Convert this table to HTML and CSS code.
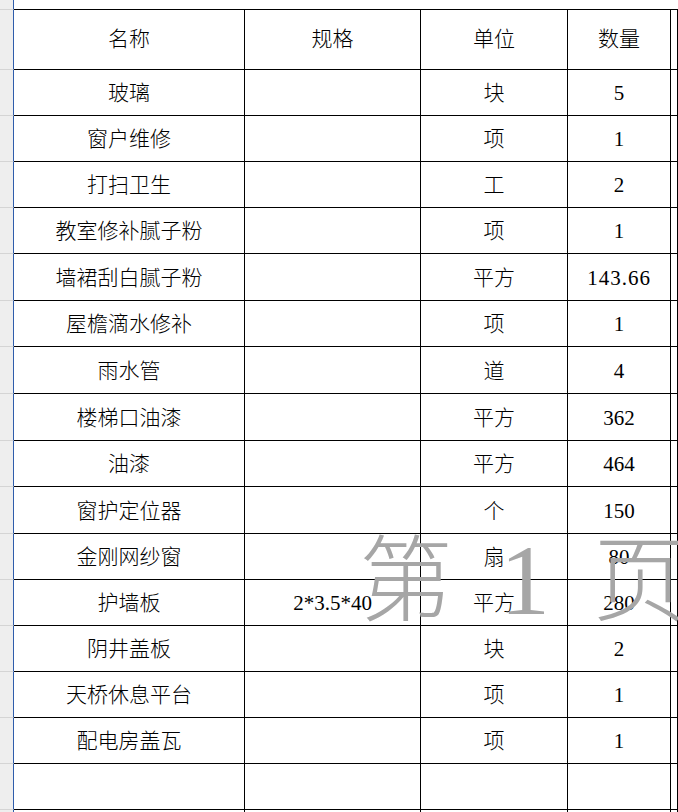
FILE: index.html
```html
<!DOCTYPE html>
<html lang="zh">
<head>
<meta charset="utf-8">
<title>工程清单</title>
<link rel="stylesheet" href="styles.css">
</head>
<body>
<div class="sheet">
  <div class="row r-top"><div class="strip"></div><div class="cell top-span"></div></div>
  <div class="row r-head"><div class="strip"></div><div class="cell">名称</div><div class="cell">规格</div><div class="cell">单位</div><div class="cell">数量</div><div class="cell"></div></div>
  <div class="row"><div class="strip"></div><div class="cell">玻璃</div><div class="cell"></div><div class="cell">块</div><div class="cell">5</div><div class="cell"></div></div>
  <div class="row"><div class="strip"></div><div class="cell">窗户维修</div><div class="cell"></div><div class="cell">项</div><div class="cell">1</div><div class="cell"></div></div>
  <div class="row"><div class="strip"></div><div class="cell">打扫卫生</div><div class="cell"></div><div class="cell">工</div><div class="cell">2</div><div class="cell"></div></div>
  <div class="row"><div class="strip"></div><div class="cell">教室修补腻子粉</div><div class="cell"></div><div class="cell">项</div><div class="cell">1</div><div class="cell"></div></div>
  <div class="row tall"><div class="strip"></div><div class="cell">墙裙刮白腻子粉</div><div class="cell"></div><div class="cell">平方</div><div class="cell num-dec">143.66</div><div class="cell"></div></div>
  <div class="row"><div class="strip"></div><div class="cell">屋檐滴水修补</div><div class="cell"></div><div class="cell">项</div><div class="cell">1</div><div class="cell"></div></div>
  <div class="row tall"><div class="strip"></div><div class="cell">雨水管</div><div class="cell"></div><div class="cell">道</div><div class="cell">4</div><div class="cell"></div></div>
  <div class="row tall"><div class="strip"></div><div class="cell">楼梯口油漆</div><div class="cell"></div><div class="cell">平方</div><div class="cell">362</div><div class="cell"></div></div>
  <div class="row"><div class="strip"></div><div class="cell">油漆</div><div class="cell"></div><div class="cell">平方</div><div class="cell">464</div><div class="cell"></div></div>
  <div class="row tall"><div class="strip"></div><div class="cell">窗护定位器</div><div class="cell"></div><div class="cell">个</div><div class="cell">150</div><div class="cell"></div></div>
  <div class="row"><div class="strip"></div><div class="cell">金刚网纱窗</div><div class="cell"></div><div class="cell">扇</div><div class="cell">80</div><div class="cell"></div></div>
  <div class="row"><div class="strip"></div><div class="cell">护墙板</div><div class="cell">2*3.5*40</div><div class="cell">平方</div><div class="cell">280</div><div class="cell"></div></div>
  <div class="row"><div class="strip"></div><div class="cell">阴井盖板</div><div class="cell"></div><div class="cell">块</div><div class="cell">2</div><div class="cell"></div></div>
  <div class="row"><div class="strip"></div><div class="cell">天桥休息平台</div><div class="cell"></div><div class="cell">项</div><div class="cell">1</div><div class="cell"></div></div>
  <div class="row"><div class="strip"></div><div class="cell">配电房盖瓦</div><div class="cell"></div><div class="cell">项</div><div class="cell">1</div><div class="cell"></div></div>
  <div class="row"><div class="strip"></div><div class="cell"></div><div class="cell"></div><div class="cell"></div><div class="cell"></div><div class="cell"></div></div>
  <div class="row"><div class="strip"></div><div class="cell"></div><div class="cell"></div><div class="cell"></div><div class="cell"></div><div class="cell"></div></div>

  <div class="watermark" aria-hidden="true">
    <span class="wm-cjk">第</span><span class="wm-num">1</span><span class="wm-cjk wm-last">页</span>
  </div>
</div>
</body>
</html>
```
FILE: styles.css
```css
html, body {
  margin: 0;
  padding: 0;
  background: #ffffff;
}

body {
  width: 678px;
  height: 812px;
  overflow: hidden;
}

.sheet {
  position: relative;
  width: 678px;
  height: 812px;
  overflow: hidden;
  font-family: "Liberation Serif", "Noto Sans CJK SC", serif;
  font-size: 21px;
  color: #000000;
}

.row {
  display: grid;
  grid-template-columns: 14px 231px 176px 147px 103px 1fr;
  height: 46px;
}

.row.tall {
  height: 47px;
}

.row.r-top {
  grid-template-columns: 14px 1fr;
  height: 10px;
}

.row.r-head {
  height: 60px;
}

.strip {
  box-sizing: border-box;
  background: #eeeeee;
  border-right: 1px solid #2f5dab;
  border-bottom: 1px solid #d4d4d4;
}

.cell {
  box-sizing: border-box;
  border-right: 1px solid #000000;
  border-bottom: 1px solid #000000;
  display: flex;
  align-items: center;
  justify-content: center;
  padding-top: 3px;
  line-height: 1.2;
  font-weight: 300;
  white-space: nowrap;
}

.cell.num-dec {
  letter-spacing: 1px;
}

.cell.top-span {
  border-right: none;
}

.r-head .cell {
  padding-top: 0;
}

.watermark {
  position: absolute;
  left: 359px;
  top: 526px;
  display: flex;
  align-items: baseline;
  color: #a6a6a6;
  line-height: 1;
  pointer-events: none;
}

.wm-cjk {
  font-family: "Noto Sans CJK SC", sans-serif;
  font-size: 94px;
  font-weight: 300;
}

.wm-num {
  font-family: "Liberation Serif", serif;
  font-size: 100px;
  margin-left: 47px;
  margin-right: 43px;
}
```
